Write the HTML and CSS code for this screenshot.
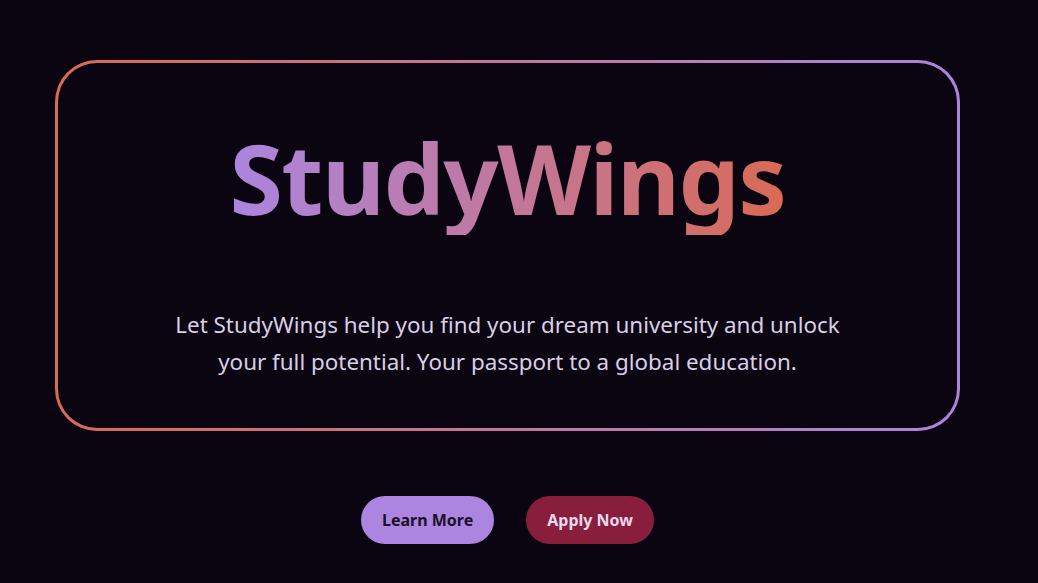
FILE: index.html
```html
<!DOCTYPE html>
<html lang="en">
<head>
<meta charset="utf-8">
<title>StudyWings</title>
<link rel="stylesheet" href="styles.css">
</head>
<body>
<main class="page">
  <section class="hero">
    <h1 class="title">StudyWings</h1>
    <p class="lead">Let StudyWings help you find your dream university and unlock your full potential. Your passport to a global education.</p>
  </section>
  <div class="actions">
    <a class="btn btn-primary" href="#">Learn More</a>
    <a class="btn btn-secondary" href="#">Apply Now</a>
  </div>
</main>
</body>
</html>
```

FILE: styles.css
```css
html, body {
  margin: 0;
  padding: 0;
  background: #0b0512;
  height: 100%;
}
body {
  font-family: "Noto Sans", "Open Sans", sans-serif;
  color: #d9cfe6;
}
.page {
  padding: 60px 78px 0 55px;
  display: flex;
  flex-direction: column;
  align-items: stretch;
}
.hero {
  border: 3px solid transparent;
  border-radius: 42px;
  background:
    linear-gradient(#0b0512, #0b0512) padding-box,
    linear-gradient(to right, #d96a55, #ab85e0) border-box;
  height: 371px;
  box-sizing: border-box;
  display: flex;
  flex-direction: column;
  align-items: center;
  padding-top: 56px;
}
.title {
  margin: 0;
  font-size: 97px;
  font-weight: 700;
  line-height: 1.2;
  letter-spacing: -1.5px;
  background: linear-gradient(to right, #ab85e0, #d96a55);
  -webkit-background-clip: text;
  background-clip: text;
  color: transparent;
}
.lead {
  margin: 71px 0 0;
  max-width: 690px;
  text-align: center;
  font-size: 22.4px;
  line-height: 37px;
  color: #d9cfe6;
}
.actions {
  display: flex;
  justify-content: center;
  gap: 32px;
  margin-top: 65px;
}
.btn {
  display: inline-flex;
  align-items: center;
  justify-content: center;
  height: 48px;
  padding: 0 21px;
  border-radius: 24px;
  font-size: 16px;
  font-weight: 700;
  text-decoration: none;
}
.btn-primary {
  background: #ab85e0;
  color: #1c1029;
}
.btn-secondary {
  background: #891e3c;
  color: #ead9ee;
}
```
